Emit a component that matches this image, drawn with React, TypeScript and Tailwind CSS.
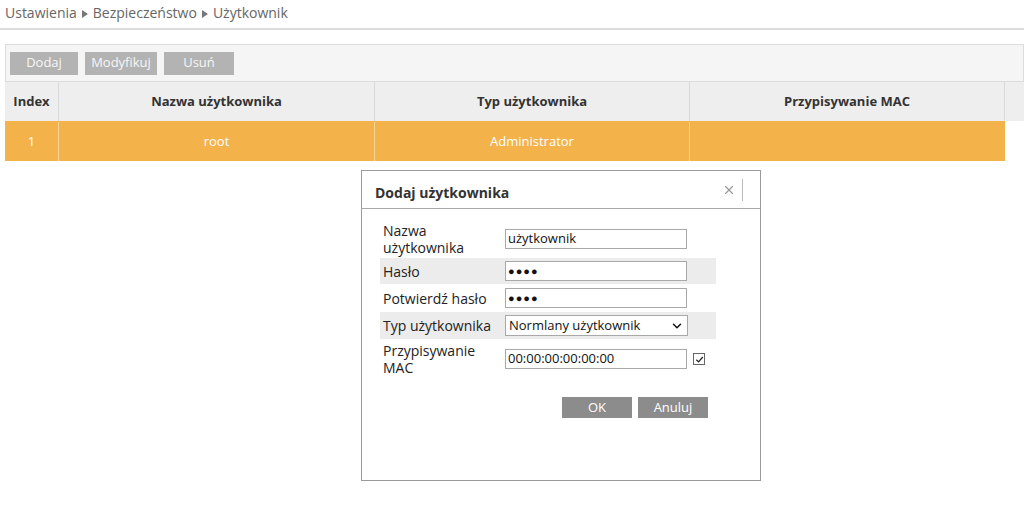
import { ChevronDown, X } from "lucide-react";

const font = { fontFamily: '"Open Sans", "Noto Sans", sans-serif' };

function Field({ label, stripe, children, extra }: { label: React.ReactNode; stripe?: boolean; children: React.ReactNode; extra?: React.ReactNode }) {
  return (
    <div className={`flex items-center ${stripe ? "bg-[#ececec]" : ""}`}>
      <div className="w-[125px] pl-[3px] text-[14px] leading-[17px] text-[#222]">{label}</div>
      {children}
      {extra}
    </div>
  )
}

function Input({ value, dots }: { value: string; dots?: boolean }) {
  return (
    <div className="flex h-[20px] w-[182px] items-center border border-[#a8a8a8] bg-white px-[2px] text-[13px] text-[#111]">
      {dots ? <span className="text-[11px] tracking-[1px]">●●●●</span> : value}
    </div>
  )
}

function Arrow() {
  return (
    <svg viewBox="0 0 6 8" className="mx-[5px] inline-block h-[8px] w-[6px] align-middle">
      <path d="M0 0 L6 4 L0 8 Z" fill="#777" />
    </svg>
  )
}

export default function App() {
  return (
    <div className="relative h-[506px] w-[1024px] overflow-hidden bg-white" style={font}>
      <div className="h-[30px] border-b-2 border-[#dcdcdc] pl-[5px] pt-[2px] text-[14px] text-[#666]">
        Ustawienia<Arrow />Bezpieczeństwo<Arrow />Użytkownik
      </div>

      <div className="ml-[5px] mt-[14px]">
        <div className="flex h-[38px] items-center gap-[7px] border border-[#dcdcdc] bg-[#f5f5f5] pl-[4px]">
          <button className="h-[23px] w-[68px] bg-[#b3b3b3] text-[13px] text-[#f7f7f7]">Dodaj</button>
          <button className="h-[23px] w-[72px] bg-[#b3b3b3] text-[13px] text-[#f7f7f7]">Modyfikuj</button>
          <button className="h-[23px] w-[70px] bg-[#b3b3b3] text-[13px] text-[#f7f7f7]">Usuń</button>
        </div>

        <div className="flex h-[39px] bg-[#eeeeee] text-[13px] font-bold text-[#333]">
          <div className="flex w-[54px] items-center justify-center border-r border-[#dadada]">Index</div>
          <div className="flex w-[316px] items-center justify-center border-r border-[#dadada]">Nazwa użytkownika</div>
          <div className="flex w-[315px] items-center justify-center border-r border-[#dadada]">Typ użytkownika</div>
          <div className="flex w-[315px] items-center justify-center border-r border-[#dadada]">Przypisywanie MAC</div>
          <div className="flex-1" />
        </div>

        <div className="flex h-[40px] w-[1000px] bg-[#f4b24b] pt-[1px] text-[13px] text-white">
          <div className="flex w-[54px] items-center justify-center border-r border-[#f8d59a]">1</div>
          <div className="flex w-[316px] items-center justify-center border-r border-[#f8d59a]">root</div>
          <div className="flex w-[315px] items-center justify-center border-r border-[#f8d59a]">Administrator</div>
          <div className="flex-1" />
        </div>
      </div>

      <div className="absolute left-[361px] top-[170px] flex h-[311px] w-[400px] flex-col border border-[#9a9a9a] bg-white">
        <div className="flex h-[38px] items-center justify-between border-b border-[#a8a8a8] pl-[13px] pr-[17px]">
          <span className="pt-[6px] text-[14px] font-bold text-[#333]">Dodaj użytkownika</span>
          <div className="flex items-center">
            <X size={14} strokeWidth={2} className="text-[#9a9a9a]" />
            <div className="ml-[6px] h-[22px] w-px bg-[#bbbbbb]" />
          </div>
        </div>

        <div className="ml-[18px] mt-[13px] flex w-[336px] flex-col">
          <Field label={<>Nazwa<br />użytkownika</>}>
            <div className="py-[1px]"><Input value="użytkownik" /></div>
          </Field>
          <div className="h-[2px]" />
          <Field label="Hasło" stripe>
            <div className="py-[3px]"><Input value="" dots /></div>
          </Field>
          <Field label="Potwierdź hasło">
            <div className="py-[4px]"><Input value="" dots /></div>
          </Field>
          <Field label="Typ użytkownika" stripe>
            <div className="py-[3px]">
              <div className="flex h-[21px] w-[183px] items-center justify-between border border-[#a8a8a8] bg-white pl-[3px] pr-[3px] text-[13px] text-[#111]">
                Normlany użytkownik
                <ChevronDown size={14} strokeWidth={2.5} className="text-[#111]" />
              </div>
            </div>
          </Field>
          <div className="h-[3px]" />
          <Field
            label={<>Przypisywanie<br />MAC</>}
            extra={
              <div className="ml-[6px] flex h-[12px] w-[12px] items-center justify-center border border-[#666] bg-white">
                <svg viewBox="0 0 10 10" className="h-[9px] w-[9px]"><path d="M1.5 5.2 L4 7.6 L8.6 2.2" fill="none" stroke="#222" strokeWidth="1.4" /></svg>
              </div>
            }
          >
            <Input value="00:00:00:00:00:00" />
          </Field>
        </div>

        <div className="ml-[200px] mt-[21px] flex gap-[6px]">
          <button className="h-[21px] w-[70px] bg-[#8c8c8c] text-[13px] text-white">OK</button>
          <button className="h-[21px] w-[70px] bg-[#8c8c8c] text-[13px] text-white">Anuluj</button>
        </div>
      </div>
    </div>
  )
}
